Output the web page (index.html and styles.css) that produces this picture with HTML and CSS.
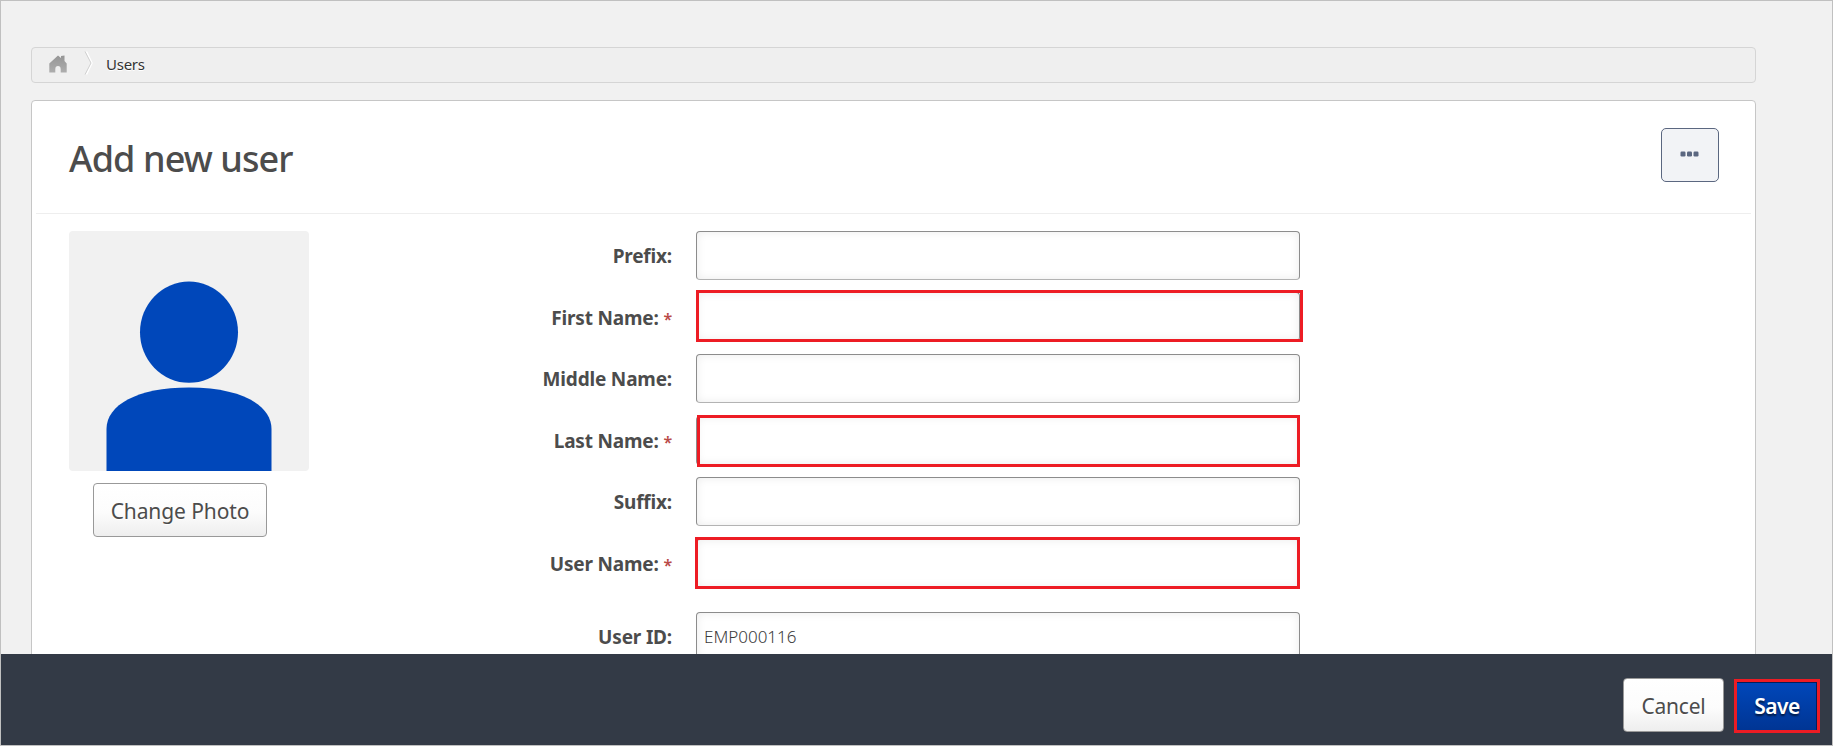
FILE: index.html
```html
<!DOCTYPE html>
<html lang="en">
<head>
<meta charset="utf-8">
<title>Add new user</title>
<link rel="stylesheet" href="styles.css">
</head>
<body>
<div class="page">
  <div class="content">
    <nav class="breadcrumb">
      <svg class="home" width="18" height="18" viewBox="0 0 18 18">
        <defs><linearGradient id="hg" x1="0" y1="0" x2="0" y2="1"><stop offset="0" stop-color="#959595"/><stop offset="1" stop-color="#adadad"/></linearGradient></defs>
        <path fill="url(#hg)" d="M.3 8.500 9 .5l3 2.500V1l3.500-.6v5.600L17.700 8.500V17.500h-6v-3.300c0-2-1-3.200-2.700-3.200s-2.700 1.200-2.700 3.200V17.500H.3z"/>
      </svg>
      <svg class="chevron" width="9" height="24" viewBox="0 0 9 24"><path d="M2.500 .5 8 12 2.500 23.500" fill="none" stroke="#fff" stroke-width="1.500"/><path d="M1 .5 7 12 1 23.500" fill="none" stroke="#d0d0d0"/></svg>
      <span class="crumb">Users</span>
    </nav>
    <main class="card">
      <header class="card-header">
        <h1 class="title">Add new user</h1>
        <button class="more" aria-label="More"><svg width="20" height="6" viewBox="0 0 20 6" fill="#5b6780"><rect x=".5" y=".5" width="5" height="5" rx="1.200"/><rect x="7" y=".5" width="5" height="5" rx="1.200"/><rect x="13.500" y=".5" width="5" height="5" rx="1.200"/></svg></button>
      </header>
      <div class="card-body">
        <section class="photo">
          <svg class="avatar" width="240" height="240" viewBox="0 0 240 240">
            <rect width="240" height="240" fill="#f1f1f1"/>
            <ellipse cx="120" cy="101.200" rx="49" ry="50.600" fill="#0047ba"/>
            <path fill="#0047ba" d="M37.500 240V198C37.500 174 68 156.500 120 156.500S202.500 174 202.500 198V240z"/>
          </svg>
          <button class="btn change">Change Photo</button>
        </section>
        <form class="form">
          <div class="row"><label class="label">Prefix:</label><div class="field"><input class="input"></div></div>
          <div class="row"><label class="label">First Name: <span class="req">*</span></label><div class="field"><input class="input raised"><span class="mark mark-first"></span></div></div>
          <div class="row"><label class="label">Middle Name:</label><div class="field"><input class="input"></div></div>
          <div class="row"><label class="label">Last Name: <span class="req">*</span></label><div class="field"><input class="input"><span class="mark mark-last"></span></div></div>
          <div class="row"><label class="label">Suffix:</label><div class="field"><input class="input"></div></div>
          <div class="row"><label class="label">User Name: <span class="req">*</span></label><div class="field"><input class="input"><span class="mark mark-user"></span></div></div>
          <div class="row row-id"><label class="label">User ID:</label><div class="field"><input class="input" value="EMP000116"></div></div>
        </form>
      </div>
    </main>
  </div>
  <footer class="footer">
    <button class="btn cancel">Cancel</button>
    <button class="save">Save</button>
  </footer>
</div>
</body>
</html>
```
FILE: styles.css
```css
* { box-sizing: border-box; }
body { margin: 0; font-family: "Noto Sans", "Open Sans", sans-serif; color: #4c4c4c; }
button, input { font-family: inherit; }
.page { width: 1833px; height: 746px; display: flex; flex-direction: column; border: 1px solid #c0c0c0; background: #f1f1f1; overflow: hidden; }
.content { flex: 0 0 653px; padding: 46px 76px 0 30px; overflow: hidden; }
.breadcrumb { display: flex; align-items: center; height: 36px; padding-left: 17px; border: 1px solid #d5d5d5; border-radius: 4px; background: #efefef; }
.home { margin-top: -2px; }
.chevron { margin: -4px 0 0 17px; }
.crumb { margin: -2px 0 0 13px; font-size: 15px; line-height: 20px; letter-spacing: -0.25px; color: #333; text-shadow: 0 1px 0 #fff; }
.card { height: 800px; margin-top: 17px; padding: 0 4px; border: 1px solid #c6c6c6; border-radius: 4px; background: #fff; }
.card-header { display: flex; justify-content: space-between; align-items: flex-start; height: 113px; padding: 27px 32px 0 33px; border-bottom: 1px solid #eee; }
.title { margin: 7px 0 0; font-size: 36px; line-height: 48px; font-weight: 500; letter-spacing: -0.9px; }
.more { display: flex; justify-content: center; width: 58px; height: 54px; padding: 22px 0 0; border: 1px solid #5b6780; border-radius: 5px; background: #f2f3f6; }
.card-body { display: flex; padding: 17px 0 0 33px; }
.photo { width: 240px; }
.avatar { display: block; border-radius: 4px; }
.btn { padding: 2px 0 0; border: 1px solid #999; border-radius: 4px; background: linear-gradient(#fff 0%, #fcfcfc 55%, #eee 100%); color: #4c4c4c; font-size: 21px; line-height: 50px; text-shadow: 0 1px 0 #fff; }
.change { display: block; width: 174px; height: 54px; margin: 12px 0 0 24px; letter-spacing: -0.1px; }
.form { flex: none; width: 991px; }
.row { display: flex; height: 61.5px; }
.label { width: 363px; margin-right: 24px; line-height: 50.5px; text-align: right; font-size: 19px; font-weight: 700; letter-spacing: -0.18px; white-space: pre; }
.req { color: #b94a48; font-size: 16px; font-weight: 600; line-height: 1; }
.field { position: relative; width: 604px; height: 49px; }
.input { display: block; width: 100%; height: 49px; padding: 0 7px; border: 1px solid #8c8c8c; border-bottom-color: #b3b3b3; border-radius: 4px; background: #fff; box-shadow: inset 0 0 10px rgba(0, 0, 0, 0.08); color: #3c3c3c; font-size: 17px; font-weight: 300; }
.raised { margin-top: -1px; }
.row-id { margin-top: 12px; }
/* Required-field callouts drawn over the inputs */
.mark { position: absolute; height: 52px; border: 3px solid #ed1c24; pointer-events: none; }
.mark-first { left: 0; top: -2.5px; width: 607px; }
.mark-last { left: 1px; top: -.5px; width: 603px; }
.mark-user { left: -1px; top: -1.500px; width: 605px; }
.footer { flex: 1; display: flex; gap: 10px; justify-content: flex-end; padding: 24px 12px 0 0; background: #333a46; }
.cancel { width: 101px; height: 54px; letter-spacing: -0.2px; }
.save { width: 86px; height: 54px; margin-top: 1px; padding: 0; border: 3px solid #ed1c24; background: linear-gradient(#0047ba, #003594); box-shadow: inset -1px 1px #001f5c; color: #fff; font-size: 21px; font-weight: 600; letter-spacing: -0.5px; line-height: 48px; text-shadow: 0 2px 2px rgba(0, 0, 0, 0.6); }
```
